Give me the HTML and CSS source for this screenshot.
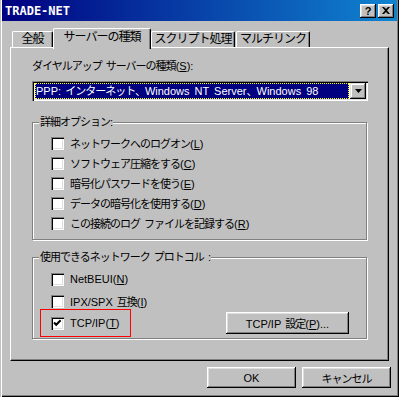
FILE: index.html
```html
<!DOCTYPE html>
<html>
    <head>
        <meta charset="utf-8">
        <link rel="stylesheet" href="styles.css">
    </head>
    <body>
        <div class="window">
            <div class="titlebar">
                <span class="title">TRADE-NET</span>
                <div class="title-buttons">
                    <span class="tbtn help">?</span>
                    <span class="tbtn">
                        <svg width="8" height="7" viewBox="0 0 8 7">
                            <path d="M0 0 L2 0 L4 2 L6 0 L8 0 L5 3.5 L8 7 L6 7 L4 5 L2 7 L0 7 L3 3.5 Z" fill="#000"/>
                        </svg>
                    </span>
                </div>
            </div>
            <div class="dialog-body">
                <div class="tabs">
                    <div class="tab tab-general">全般</div>
                    <div class="tab active">サーバーの種類</div>
                    <div class="tab tab-script">スクリプト処理</div>
                    <div class="tab tab-multi">マルチリンク</div>
                </div>
                <div class="panel">
                    <div class="label">ダイヤルアップ サーバーの種類<span class="en">(<u>S</u>):</span></div>
                    <div class="select">
                        <div class="select-value"><span class="en">PPP:</span> インターネット、<span class="en">Windows NT Server</span>、<span class="en">Windows 98</span></div>
                        <div class="select-arrow">
                            <svg width="7" height="4" viewBox="0 0 7 4"><path d="M0 0 H7 L3.5 4 Z" fill="#000"/></svg>
                        </div>
                    </div>

                    <fieldset class="group">
                        <legend>詳細オプション:</legend>
                        <div class="options">
                            <div class="check"><span class="box"></span><span>ネットワークへのログオン<span class="en">(<u>L</u>)</span></span></div>
                            <div class="check"><span class="box"></span><span>ソフトウェア圧縮をする<span class="en">(<u>C</u>)</span></span></div>
                            <div class="check"><span class="box"></span><span>暗号化パスワードを使う<span class="en">(<u>E</u>)</span></span></div>
                            <div class="check"><span class="box"></span><span>データの暗号化を使用する<span class="en">(<u>D</u>)</span></span></div>
                            <div class="check"><span class="box"></span><span>この接続のログ ファイルを記録する<span class="en">(<u>R</u>)</span></span></div>
                        </div>
                    </fieldset>

                    <fieldset class="group protocols">
                        <legend>使用できるネットワーク プロトコル :</legend>
                        <div class="options">
                            <div class="check tall"><span class="box"></span><span class="en">NetBEUI(<u>N</u>)</span></div>
                            <div class="check tall"><span class="box"></span><span><span class="en">IPX/SPX</span> 互換<span class="en">(<u>I</u>)</span></span></div>
                            <div class="proto-row">
                                <div class="marked">
                                    <div class="check"><span class="box">
                                        <svg width="13" height="13" viewBox="0 0 13 13"><polyline points="3,5.5 5.2,7.8 9.6,3.2" fill="none" stroke="#000" stroke-width="2"/></svg>
                                    </span><span class="en">TCP/IP(<u>T</u>)</span></div>
                                </div>
                                <button class="btn settings"><span class="en">TCP/IP</span> 設定<span class="en">(<u>P</u>)...</span></button>
                            </div>
                        </div>
                    </fieldset>
                </div>
                <div class="actions">
                    <button class="btn default"><span class="en">OK</span></button>
                    <button class="btn">キャンセル</button>
                </div>
            </div>
        </div>
    </body>
</html>
```

FILE: styles.css
```css
* {
    box-sizing: border-box;
}

body {
    margin: 0;
    background: #c0c0c0;
    font-family: "Liberation Sans", "Noto Sans CJK JP", sans-serif;
    font-size: 11px;
    letter-spacing: -1px;
    word-spacing: 2px;
    color: #000;
}

.en {
    letter-spacing: 0;
    word-spacing: 2px;
}

u {
    text-underline-offset: 1px;
}

.window {
    width: 399px;
    height: 397px;
    padding: 0 3px 3px 3px;
    background: #c0c0c0;
    box-shadow: inset 1px 0 #c0c0c0, inset 2px 0 #fff, inset -1px -1px #000, inset -2px -2px #808080;
}

.titlebar {
    height: 21px;
    margin: 0 -1px;
    padding: 0 3px 0 3px;
    display: flex;
    align-items: center;
    justify-content: space-between;
    background: linear-gradient(to right, #000080, #1084d0);
}

.title {
    color: #fff;
    font-family: "DejaVu Sans Mono", monospace;
    font-weight: bold;
    font-size: 12px;
    letter-spacing: 0;
}

.title-buttons {
    display: flex;
    gap: 2px;
}

.tbtn {
    width: 16px;
    height: 14px;
    display: flex;
    align-items: center;
    justify-content: center;
    background: #c0c0c0;
    box-shadow: inset -1px -1px #000, inset 1px 1px #fff, inset -2px -2px #808080, inset 2px 2px #dfdfdf;
}

.help {
    font-weight: bold;
    font-size: 11px;
    letter-spacing: 0;
    line-height: 14px;
}

.dialog-body {
    padding: 7px 7px 0;
}

.tabs {
    display: flex;
    align-items: flex-end;
    height: 19px;
    padding-left: 2px;
}

.tab {
    height: 16px;
    font-size: 12px;
    line-height: 14px;
    white-space: nowrap;
    text-align: center;
    border-top: 1px solid #fff;
    border-left: 1px solid #fff;
    border-right: 1px solid #000;
    border-radius: 2px 2px 0 0;
    box-shadow: inset -1px 0 #808080;
    background: #c0c0c0;
}

.tab-general {
    width: 41px;
}

.tab.active {
    width: 98px;
    height: 21px;
    margin-bottom: -2px;
    padding-top: 1px;
    position: relative;
    z-index: 1;
}

.tab-script {
    width: 84px;
}

.tab-multi {
    width: 74px;
    margin-left: 1px;
}

.panel {
    height: 314px;
    padding: 11px 21px 0;
    border-top: 1px solid #fff;
    border-left: 1px solid #fff;
    border-right: 1px solid #000;
    border-bottom: 1px solid #000;
    box-shadow: inset -1px -1px #808080;
}

.label {
    line-height: 14px;
}

.select {
    margin-top: 8px;
    width: 336px;
    height: 20px;
    padding: 2px;
    display: flex;
    background: #fff;
    box-shadow: inset 1px 1px #808080, inset 2px 2px #000, inset -1px -1px #fff, inset -2px -2px #dfdfdf;
}

.select-value {
    flex: 1;
    height: 16px;
    margin: 0 1px;
    line-height: 14px;
    white-space: nowrap;
    overflow: hidden;
    color: #fff;
    background: #000080;
    border: 1px dotted #ffff00;
}

.select-arrow {
    width: 16px;
    height: 16px;
    display: flex;
    align-items: center;
    justify-content: center;
    background: #c0c0c0;
    box-shadow: inset -1px -1px #000, inset 1px 1px #dfdfdf, inset -2px -2px #808080, inset 2px 2px #fff;
}

.group {
    margin: 14px 0 0;
    padding: 0;
    min-width: 0;
    border: 1px solid #808080;
    box-shadow: inset 1px 1px #fff, 1px 1px #fff;
}

.group legend {
    margin-left: 6px;
    padding: 0 1px;
    line-height: 14px;
    background: #c0c0c0;
}

.options {
    padding: 4px 0 6px 18px;
}

.check {
    height: 20px;
    display: flex;
    align-items: center;
    white-space: nowrap;
}

.check.tall {
    height: 22px;
}

.box {
    width: 13px;
    height: 13px;
    margin-right: 6px;
    flex-shrink: 0;
    display: flex;
    background: #fff;
    box-shadow: inset 1px 1px #808080, inset 2px 2px #000, inset -1px -1px #fff, inset -2px -2px #dfdfdf;
}

.protocols {
    margin-top: 10px;
}

.protocols .options {
    padding-bottom: 1px;
}

.proto-row {
    display: flex;
    align-items: center;
    margin-top: -3px;
    margin-left: -11px;
}

.marked {
    width: 91px;
    height: 28px;
    padding-left: 10px;
    display: flex;
    align-items: center;
    border: 1px solid #ff0000;
}

.btn {
    padding: 0;
    border: none;
    font: inherit;
    letter-spacing: inherit;
    word-spacing: inherit;
    color: #000;
    background: #c0c0c0;
    box-shadow: inset -1px -1px #000, inset 1px 1px #fff, inset -2px -2px #808080, inset 2px 2px #dfdfdf;
}

.settings {
    width: 123px;
    height: 22px;
    margin-left: auto;
    margin-right: 17px;
}

.actions {
    display: flex;
    justify-content: flex-end;
    gap: 6px;
    margin-top: 6px;
    margin-right: -2px;
}

.actions .btn {
    width: 89px;
    height: 21px;
}
```
